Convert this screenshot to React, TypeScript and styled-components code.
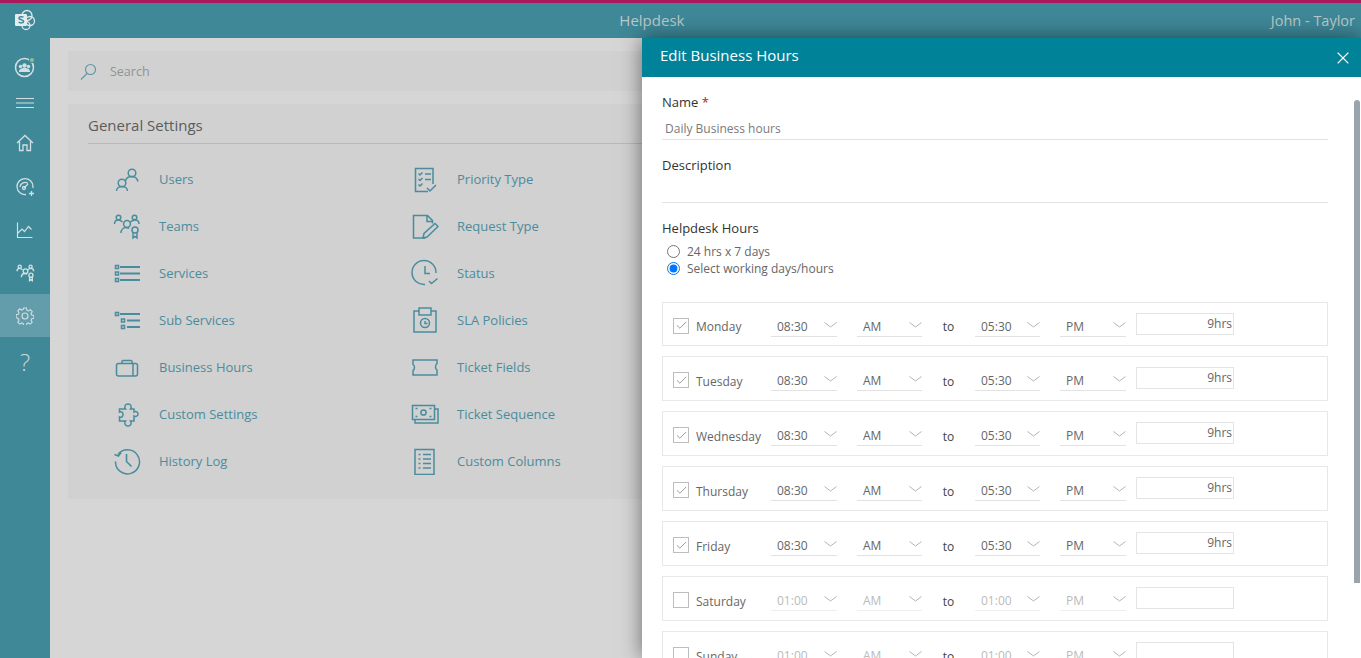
import React from 'react'
import styled, { createGlobalStyle } from 'styled-components'
import { X, Check } from 'lucide-react'

const Global = createGlobalStyle`
    html, body {
        margin: 0;
        height: 100%;
        overflow: hidden;
    }
    body {
        font-family: "Open Sans", "Noto Sans", sans-serif;
        background: #d6d6d6;
    }
    * {
        box-sizing: border-box;
    }
`

const Page = styled.div`
    width: 1361px;
    height: 658px;
    display: flex;
    flex-direction: column;
    overflow: hidden;
    position: relative;
`

const TopBar = styled.header`
    height: 38px;
    flex: none;
    background: #3e8898;
    border-top: 3px solid #aa1a5a;
    display: grid;
    grid-template-columns: 50px 1fr auto;
    align-items: center;
    color: #bcc8ca;
`

const LogoCell = styled.div`
    display: flex;
    justify-content: center;
    margin-top: -1px;
`

const AppTitle = styled.div`
    font-size: 15px;
    text-align: center;
    padding-right: 17px;
    margin-top: -2px;
`

const UserName = styled.div`
    font-size: 14.5px;
    padding-right: 6px;
`

const Body = styled.div`
    flex: 1;
    display: flex;
    min-height: 0;
`

const Sidebar = styled.nav`
    width: 50px;
    flex: none;
    background: #3e8898;
    display: flex;
    flex-direction: column;
    padding-top: 7px;
`

const NavItem = styled.div<{ $active?: boolean; $h: number; $mb?: number }>`
    height: ${p => p.$h}px;
    margin-bottom: ${p => p.$mb ?? 0}px;
    display: flex;
    align-items: center;
    justify-content: center;
    color: #d3dfe2;
    background: ${p => (p.$active ? '#639dac' : 'transparent')};
`

const HelpMark = styled.span`
    font-size: 24px;
    font-weight: 300;
    color: #c8d8dc;
`

const Main = styled.main`
    flex: 1;
    padding: 13px 18px;
    display: flex;
    flex-direction: column;
    gap: 13px;
`

const SearchBar = styled.div`
    height: 40px;
    background: #d1d1d1;
    display: flex;
    align-items: center;
    gap: 13px;
    padding-left: 12px;
    font-size: 12.5px;
    color: #8f9393;
`

const SearchIcon = styled.span`
    display: flex;
    color: #5f94a3;
`

const SettingsCard = styled.section`
    height: 395px;
    background: #d1d1d1;
    padding: 11px 20px 0;
`

const CardTitle = styled.h2`
    margin: 0;
    height: 29px;
    font-size: 15px;
    font-weight: 400;
    line-height: 20px;
    color: #5c5c5c;
    border-bottom: 1px solid #b9b9b9;
`

const SettingsGrid = styled.div`
    display: grid;
    grid-template-columns: 298px 298px;
    grid-auto-rows: 47px;
    padding-top: 11px;
`

const SettingsItem = styled.a`
    display: flex;
    align-items: center;
    color: #4a8c9d;
    font-size: 13px;
`

const ItemIcon = styled.span`
    width: 71px;
    padding-left: 25px;
    display: flex;
`

const Panel = styled.aside`
    position: absolute;
    top: 38px;
    left: 642px;
    right: 0;
    bottom: 0;
    background: #fff;
    box-shadow: 0 0 20px rgba(0, 0, 0, 0.5);
    display: flex;
    flex-direction: column;
`

const PanelHeader = styled.div`
    height: 39px;
    flex: none;
    background: #008299;
    color: #fff;
    display: flex;
    align-items: center;
    justify-content: space-between;
    padding: 0 8px 5px 18px;
    font-size: 15px;
`

const CloseIcon = styled.span`
    display: flex;
    margin-top: 5px;
`

const PanelBody = styled.div`
    flex: 1;
    overflow: hidden;
    padding: 15px 33px 0 20px;
    position: relative;
`

const ScrollThumb = styled.div`
    position: absolute;
    top: 23px;
    right: 1px;
    width: 6px;
    height: 483px;
    background: #9aa4ac;
    border-radius: 3px 3px 0 0;
`

const Label = styled.div`
    font-size: 13px;
    line-height: 20px;
    color: #333;
`

const Required = styled.span`
    color: #a4262c;
`

const TextField = styled.div`
    height: 28px;
    border-bottom: 1px solid #e2e2e2;
    padding: 8px 3px 0;
    font-size: 12px;
    line-height: 17px;
    color: #7a7a7a;
    margin-bottom: 15px;
`

const RadioRow = styled.label`
    display: flex;
    align-items: center;
    gap: 7px;
    height: 17px;
    padding-left: 5px;
    font-size: 12px;
    color: #666;
`

const RadioInput = styled.input`
    margin: 0;
    width: 13px;
    height: 13px;
    accent-color: #0075ff;
`

const RadioGroup = styled.div`
    margin: 5px 0 25px;
`

const DayList = styled.div`
    display: flex;
    flex-direction: column;
    gap: 10px;
`

const DayRow = styled.div`
    height: 45px;
    flex: none;
    border: 1px solid #e8e8e8;
    display: flex;
    align-items: center;
    padding: 0 0 0 10px;
    &:first-child {
        height: 44px;
    }
`

const CheckBox = styled.span`
    width: 16px;
    height: 16px;
    flex: none;
    border: 1px solid #bdbdbd;
    color: #666;
    display: flex;
    align-items: center;
    justify-content: center;
    margin-top: 3px;
`

const DayName = styled.span`
    width: 82px;
    flex: none;
    padding-left: 7px;
    font-size: 12px;
    color: #666;
    margin-top: 5px;
`

const SelectBox = styled.div<{ $w: number; $ml?: number; $disabled?: boolean }>`
    width: ${p => p.$w}px;
    height: 22px;
    flex: none;
    margin: 3px 0 0 ${p => p.$ml ?? 0}px;
    border-bottom: 1px solid ${p => (p.$disabled ? '#eeeeee' : '#e2e2e2')};
    display: flex;
    align-items: center;
    justify-content: space-between;
    padding: 2px 0 0 6px;
    font-size: 12px;
    color: ${p => (p.$disabled ? '#bbbbbb' : '#666')};
`

const SelectArrow = styled.svg`
    color: #b4b4b4;
    margin-top: -3px;
`

const ToText = styled.span`
    width: 53px;
    flex: none;
    text-align: center;
    font-size: 12px;
    color: #444;
    margin-top: 5px;
`

const HoursBox = styled.div`
    width: 98px;
    height: 22px;
    flex: none;
    margin: -1px 0 0 10px;
    border: 1px solid #e4e4e4;
    font-size: 12px;
    line-height: 19px;
    text-align: right;
    padding-right: 1px;
    color: #666;
`

const Arrow = () => (
    <SelectArrow width="13" height="6" viewBox="0 0 13 6" fill="none" stroke="currentColor">
        <path d="M.5.5l6 4.500 6-4.500" />
    </SelectArrow>
)

const Icon = ({ size = 28, weight = 1.5, children }: { size?: number; weight?: number; children: React.ReactNode }) => (
    <svg width={size} height={size} viewBox="0 0 28 28" fill="none" stroke="currentColor" strokeWidth={weight}>
        {children}
    </svg>
)

const TeamsPaths = () => (
    <>
        <circle cx="14" cy="12" r="3.400" />
        <circle cx="5.500" cy="5.500" r="2.300" />
        <circle cx="21.500" cy="5.500" r="2.300" />
        <path d="M1.500 12c0-3 1.500-4 4-4 1.500 0 2.500.6 4 2M26 12c0-3-1.500-4-4-4-1.500 0-3 .6-4.500 2M8 21c0-3.500 2.500-5.500 5-5.500 1.300 0 2 .3 3 1" />
        <circle cx="22" cy="18" r="3" />
        <path d="M20 20.500V26l2-1.500 2 1.500v-5.500" />
    </>
)

const icons: Record<string, React.ReactNode> = {
    users: (
        <>
            <circle cx="9" cy="18" r="3.800" />
            <path d="M3.500 26c0-2.500 2.200-4.500 5.500-4.500s5.500 2 5.500 4.500" />
            <circle cx="19" cy="8" r="3.800" />
            <path d="M12.500 16c.5-3 3-4.500 6.500-4.500s5 1.500 6 5" />
        </>
    ),
    teams: <TeamsPaths />,
    services: (
        <>
            <path d="M2.500 6.500h3v3h-3zM2.500 13h3v3h-3zM2.500 19.500h3v3h-3z" />
            <path d="M7 8h20M7 14.500h20M7 21h20" strokeWidth="1.800" />
        </>
    ),
    sub: (
        <>
            <path d="M2.500 6.500h3v3h-3zM8.500 13h3v3h-3zM8.500 19.500h3v3h-3z" />
            <path d="M7 8h20M14 14.500h13M14 21h13" strokeWidth="1.800" />
        </>
    ),
    hours: (
        <>
            <rect x="3.500" y="10.500" width="21" height="12.500" rx="2" />
            <path d="M9 10.500V8.500C9 7.800 9.500 7.500 10 7.500h8c.5 0 1 .3 1 1v2M20 10.500V23" />
        </>
    ),
    custom: (
        <path d="M12.500 9c-1.500-2-.5-5 2.500-5s4 3 2.500 5H21v3c2-1 4 0 4 2s-2 3-4 2v5h-3.500c1.500 2 .5 5-2.500 5s-4-3-2.500-5H6.500v-4c2 1 3.500-.5 3.500-2.500s-1.500-3.500-3.500-2.500V9z" />
    ),
    history: (
        <>
            <path d="M5 7.500A12 12 0 1 1 2.500 14.500" />
            <path d="M1.500 7.500l4 1.500 2.500-3.500" />
            <path d="M13.500 7v7.500l5 5" strokeWidth="1.600" />
        </>
    ),
    priority: (
        <g transform="translate(-1 1)">
            <path d="M23 18V2.500H5.500v23H18" />
            <path d="M8.500 7.500l1.500 1.500 2.500-2.500M8.500 13l1.500 1.500 2.500-2.500M8.500 18.500l1.500 1.500 2.500-2.500M15 8h6M15 13.500h6" />
            <path d="M17 22l3 3 6-6" />
        </g>
    ),
    request: (
        <g transform="translate(0 1)">
            <path d="M14.500 25H2.500V2.500h14l5 5v3M16 2.500v6h5.500" />
            <path d="M12 25l1-4.500 11-10 3 3-11 10.500z" />
        </g>
    ),
    status: (
        <>
            <path d="M25 14A12 12 0 1 0 14 25.500" />
            <path d="M14 7v7.500h5" strokeWidth="1.500" />
            <path d="M18 22l2.500 2.500 6-5" />
        </>
    ),
    sla: (
        <>
            <path d="M8 5H3v21h22V5h-5" />
            <path d="M8 2h12v7H8z" />
            <circle cx="14" cy="17" r="4.500" />
            <path d="M14 15v2.500h2.500" />
        </>
    ),
    ticket: (
        <path transform="translate(0 2)" d="M2 5h24v3.500c-2 1.500-2 5.500 0 6.500v5H2v-4.500c2-1.500 2-4.500 0-6V5z" />
    ),
    sequence: (
        <g transform="translate(0 1)">
            <path d="M1.500 4.500h22v14h-22z" />
            <circle cx="12.500" cy="11.500" r="2.600" />
            <path d="M24 8h3v14H4v-3.500" />
            <path d="M4.500 7.500h2M18.500 15.500h2M4.500 15.500h2M18.500 7.500h2" />
        </g>
    ),
    columns: (
        <g transform="translate(-1 .5)">
            <path d="M5 2h19v25H5z" />
            <path d="M8.500 7h2M13 7h8M8.500 11.500h2M13 11.500h8M8.500 16h2M13 16h8M8.500 20.500h2M13 20.500h8" />
        </g>
    ),
}

const settings = [
    ['users', 'Users'],
    ['priority', 'Priority Type'],
    ['teams', 'Teams'],
    ['request', 'Request Type'],
    ['services', 'Services'],
    ['status', 'Status'],
    ['sub', 'Sub Services'],
    ['sla', 'SLA Policies'],
    ['hours', 'Business Hours'],
    ['ticket', 'Ticket Fields'],
    ['custom', 'Custom Settings'],
    ['sequence', 'Ticket Sequence'],
    ['history', 'History Log'],
    ['columns', 'Custom Columns'],
]

const days = [
    { name: 'Monday', on: true },
    { name: 'Tuesday', on: true },
    { name: 'Wednesday', on: true },
    { name: 'Thursday', on: true },
    { name: 'Friday', on: true },
    { name: 'Saturday', on: false },
    { name: 'Sunday', on: false },
]

const App = () => {
    return (
        <Page>
            <Global />
            <TopBar>
                <LogoCell>
                    <svg width="22" height="22" viewBox="0 0 22 22" fill="none">
                        <circle cx="13" cy="6.500" r="5" stroke="#dfe8ea" strokeWidth="1.300" />
                        <circle cx="16" cy="12" r="4.500" stroke="#dfe8ea" strokeWidth="1.300" />
                        <circle cx="12" cy="16.500" r="4" stroke="#dfe8ea" strokeWidth="1.300" />
                        <rect x="1" y="5" width="12" height="12" rx="1" fill="#e4ecee" />
                        <path d="M9.500 8.200C8 7.400 4.800 7.600 5 9.400c.2 1.600 4.600 1.200 4.600 3 0 1.800-3.400 1.800-5 .8" stroke="#3e8898" strokeWidth="1.500" />
                    </svg>
                </LogoCell>
                <AppTitle>Helpdesk</AppTitle>
                <UserName>John - Taylor</UserName>
            </TopBar>
            <Body>
                <Sidebar>
                    <NavItem $h={44}>
                        <svg width="24" height="24" viewBox="0 0 24 24" fill="none">
                            <circle cx="11.500" cy="12.500" r="9" stroke="#d3dfe2" strokeWidth="1.500" />
                            <circle cx="7.500" cy="11.500" r="1.700" fill="#d3dfe2" />
                            <circle cx="15.500" cy="11.500" r="1.700" fill="#d3dfe2" />
                            <circle cx="11.500" cy="10.500" r="2.200" fill="#d3dfe2" />
                            <path d="M6 17c0-3 2-4 5.500-4s5.500 1 5.500 4z" fill="#d3dfe2" />
                            <circle cx="19" cy="5" r="2.500" fill="#8fbf8f" stroke="#3e8898" />
                        </svg>
                    </NavItem>
                    <NavItem $h={28}>
                        <svg width="18" height="12" viewBox="0 0 18 12" stroke="currentColor" strokeWidth="1">
                            <path d="M0 1.500h18M0 6h18M0 10.500h18" />
                        </svg>
                    </NavItem>
                    <NavItem $h={52}>
                        <svg width="18" height="18" viewBox="0 0 18 18" fill="none" stroke="currentColor" strokeWidth="1.300">
                            <path d="M1 9l8-7.500L17 9M3.500 7.500V16.500H7V11h4v5.500h3.500V7.500" />
                        </svg>
                    </NavItem>
                    <NavItem $h={36}>
                        <svg width="20" height="20" viewBox="0 0 20 20" fill="none" stroke="currentColor" strokeWidth="1.300">
                            <path d="M11 17.500A8 8 0 1 1 18 9.500c0 .5 0 1-.2 1.500" />
                            <path d="M5 10a5 5 0 0 1 8-3.500M9 11l4-4" />
                            <circle cx="9" cy="11" r="1.500" />
                            <path d="M14 16.500h5M16.500 14v5" />
                        </svg>
                    </NavItem>
                    <NavItem $h={50}>
                        <svg width="18" height="18" viewBox="0 0 18 18" fill="none" stroke="currentColor" strokeWidth="1.200">
                            <path d="M1.500 1.500v15h15M2 12l4-4 2.500 2.500 4-5 3 3" />
                        </svg>
                    </NavItem>
                    <NavItem $h={34} $mb={5}>
                        <Icon size={19} weight={2}><TeamsPaths /></Icon>
                    </NavItem>
                    <NavItem $h={43} $active>
                        <svg width="18" height="18" viewBox="0 0 18 18" fill="none" stroke="currentColor" strokeWidth="1.100">
                            <circle cx="9" cy="9" r="3" />
                            <path d="M7.600 1h2.800l.4 2.200 1.500.7 1.900-1.200 2 2-1.200 1.900.7 1.500 2.200.4v2.800l-2.200.4-.7 1.500 1.200 1.900-2 2-1.900-1.200-1.500.7-.4 2.200H7.600l-.4-2.200-1.500-.7-1.900 1.200-2-2 1.200-1.900-.7-1.500L.1 10.400V7.600l2.200-.4.700-1.500L1.800 3.800l2-2 1.900 1.200 1.500-.7z" />
                        </svg>
                    </NavItem>
                    <NavItem $h={48}>
                        <HelpMark>?</HelpMark>
                    </NavItem>
                </Sidebar>
                <Main>
                    <SearchBar>
                        <SearchIcon>
                            <svg width="17" height="17" viewBox="0 0 17 17" fill="none" stroke="currentColor" strokeWidth="1.100">
                                <circle cx="10.500" cy="6.500" r="5" />
                                <path d="M7 10.500L1 16.500" />
                            </svg>
                        </SearchIcon>
                        Search
                    </SearchBar>
                    <SettingsCard>
                        <CardTitle>General Settings</CardTitle>
                        <SettingsGrid>
                            {settings.map(([key, label]) => (
                                <SettingsItem key={key}>
                                    <ItemIcon>
                                        <Icon>{icons[key]}</Icon>
                                    </ItemIcon>
                                    {label}
                                </SettingsItem>
                            ))}
                        </SettingsGrid>
                    </SettingsCard>
                </Main>
            </Body>
            <Panel>
                <PanelHeader>
                    Edit Business Hours
                    <CloseIcon>
                        <X size={20} strokeWidth={1.3} />
                    </CloseIcon>
                </PanelHeader>
                <PanelBody>
                    <ScrollThumb />
                    <Label>Name <Required>*</Required></Label>
                    <TextField>Daily Business hours</TextField>
                    <Label>Description</Label>
                    <TextField />
                    <Label>Helpdesk Hours</Label>
                    <RadioGroup>
                        <RadioRow><RadioInput type="radio" name="hours" />24 hrs x 7 days</RadioRow>
                        <RadioRow><RadioInput type="radio" name="hours" defaultChecked />Select working days/hours</RadioRow>
                    </RadioGroup>
                    <DayList>
                        {days.map(day => (
                            <DayRow key={day.name}>
                                <CheckBox>{day.on && <Check size={13} strokeWidth={1.2} />}</CheckBox>
                                <DayName>{day.name}</DayName>
                                <SelectBox $w={66} $disabled={!day.on}>{day.on ? '08:30' : '01:00'}<Arrow /></SelectBox>
                                <SelectBox $w={65} $ml={20} $disabled={!day.on}>AM<Arrow /></SelectBox>
                                <ToText>to</ToText>
                                <SelectBox $w={65} $disabled={!day.on}>{day.on ? '05:30' : '01:00'}<Arrow /></SelectBox>
                                <SelectBox $w={66} $ml={20} $disabled={!day.on}>PM<Arrow /></SelectBox>
                                <HoursBox>{day.on ? '9hrs' : ''}</HoursBox>
                            </DayRow>
                        ))}
                    </DayList>
                </PanelBody>
            </Panel>
        </Page>
    )
}

export default App
